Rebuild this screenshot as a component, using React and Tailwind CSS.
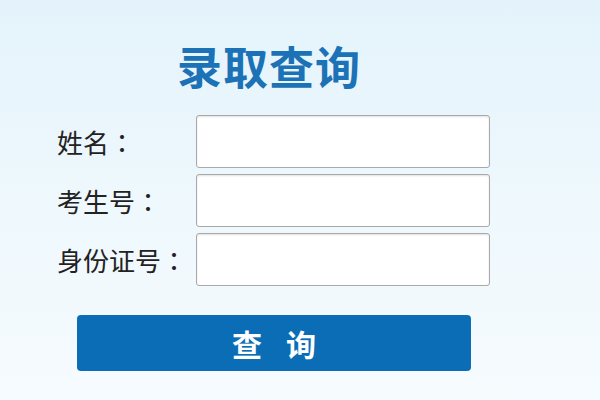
import React from 'react';

const fields = ['姓名', '考生号', '身份证号'];

const App = () => {
  return (
    <div
      className="w-[600px] h-[400px] overflow-hidden bg-gradient-to-b from-[#e4f3fb] via-[#eef8fd] to-[#f6fbfe]"
      style={{ fontFamily: '"Noto Sans CJK SC", "Noto Sans", sans-serif' }}
    >
      {/* Title */}
      <div className="pt-[38px] pl-[177px] h-[115px]">
        <h1 className="text-[45px] leading-[56px] font-bold text-[#1b72b6] tracking-[1px]">录取查询</h1>
      </div>

      {/* Form */}
      <div className="flex flex-col gap-[6px] pl-[57px]">
        {fields.map((label) => (
          <div key={label} className="flex items-center h-[53px]">
            <label className="w-[139px] text-[26px] text-[#222] flex items-center">
              <span>{label}</span>
              <span className="font-['Noto_Sans_CJK_TC',sans-serif]">：</span>
            </label>
            <input
              type="text"
              className="w-[294px] h-[53px] bg-white border border-[#a9a9a9] rounded-[3px] shadow-[inset_0_1px_2px_rgba(0,0,0,0.12)] outline-none"
            />
          </div>
        ))}
      </div>

      {/* Submit */}
      <div className="pl-[77px] pt-[29px]">
        <button className="w-[394px] h-[56px] bg-[#0a6db5] rounded-[4px] text-white text-[30px] font-bold flex items-center justify-center gap-[24px]">
          <span>查</span>
          <span>询</span>
        </button>
      </div>
    </div>
  );
};

export default App;
